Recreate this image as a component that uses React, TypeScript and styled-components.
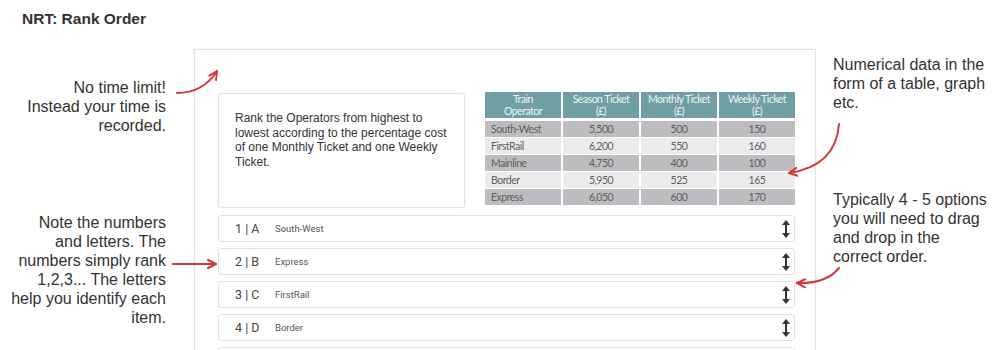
import { FC, Fragment } from 'react'
import styled, { createGlobalStyle } from 'styled-components';

const rows = [
    { name: 'South-West', season: '5,500', monthly: '500', weekly: '150' },
    { name: 'FirstRail', season: '6,200', monthly: '550', weekly: '160' },
    { name: 'Mainline', season: '4,750', monthly: '400', weekly: '100' },
    { name: 'Border', season: '5,950', monthly: '525', weekly: '165' },
    { name: 'Express', season: '6,050', monthly: '600', weekly: '170' },
];

const options = [
    { rank: '1 | A', name: 'South-West' },
    { rank: '2 | B', name: 'Express' },
    { rank: '3 | C', name: 'FirstRail' },
    { rank: '4 | D', name: 'Border' },
];

const DragIcon:FC = () => (
    <svg width="8" height="18" viewBox="0 0 8 18">
        <polygon points="4,0 8,5 0,5" fill="#333" />
        <rect x="3" y="4" width="2" height="10" fill="#333" />
        <polygon points="4,18 8,13 0,13" fill="#333" />
    </svg>
);

const Arrows:FC = () => (
    <ArrowLayer width="1000" height="350" viewBox="0 0 1000 350">
        <defs>
            <marker id="head" viewBox="0 0 10 10" refX="9" refY="5" markerWidth="5" markerHeight="5" orient="auto">
                <path d="M1 1 L9 5 L1 9" fill="none" stroke="#d23a3a" strokeWidth="2" strokeLinecap="round" strokeLinejoin="round" />
            </marker>
        </defs>
        <g fill="none" stroke="#d23a3a" strokeWidth="2" strokeLinecap="round">
            <path d="M177 93 Q203 93 217 71" markerEnd="url(#head)" />
            <path d="M173 264 L216 264" markerEnd="url(#head)" />
            <path d="M839 124 Q836 166 789 173" markerEnd="url(#head)" />
            <path d="M839 268 Q826 284 797 283" markerEnd="url(#head)" />
        </g>
    </ArrowLayer>
);

const App:FC = () => {
    return (
        <Page>
            <GlobalStyle/>
            <Title>NRT: Rank Order</Title>
            <Layout>
                <SideColumn align="right">
                    <Note offset={29}>No time limit!<br/>Instead your time is<br/>recorded.</Note>
                    <Note offset={78}>Note the numbers<br/>and letters. The<br/>numbers simply rank<br/>1,2,3... The letters<br/>help you identify each<br/>item.</Note>
                </SideColumn>
                <Panel>
                    <TopRow>
                        <Question>
                            Rank the Operators from highest to lowest according to the percentage cost of one Monthly Ticket and one Weekly Ticket.
                        </Question>
                        <DataTable>
                            <HeadCell>Train<br/>Operator</HeadCell>
                            <HeadCell>Season Ticket<br/>(£)</HeadCell>
                            <HeadCell>Monthly Ticket<br/>(£)</HeadCell>
                            <HeadCell>Weekly Ticket<br/>(£)</HeadCell>
                            {rows.map((r, i) => (
                                <Fragment key={r.name}>
                                    <Cell shade={i % 2 === 0} first>{r.name}</Cell>
                                    <Cell shade={i % 2 === 0}>{r.season}</Cell>
                                    <Cell shade={i % 2 === 0}>{r.monthly}</Cell>
                                    <Cell shade={i % 2 === 0}>{r.weekly}</Cell>
                                </Fragment>
                            ))}
                        </DataTable>
                    </TopRow>
                    <OptionList>
                        {options.map(o => (
                            <Option key={o.rank}>
                                <Rank>{o.rank}</Rank>
                                <OptionName>{o.name}</OptionName>
                                <Handle><DragIcon/></Handle>
                            </Option>
                        ))}
                        {/* fifth option, only its top edge is in view */}
                        <Option />
                    </OptionList>
                </Panel>
                <SideColumn align="left">
                    <Note offset={6}>Numerical data in the<br/>form of a table, graph<br/>etc.</Note>
                    <Note offset={78}>Typically 4 - 5 options<br/>you will need to drag<br/>and drop in the<br/>correct order.</Note>
                </SideColumn>
            </Layout>
            <Arrows/>
        </Page>
    )
}

const GlobalStyle = createGlobalStyle`
    body {
        margin: 0;
        background: #fff;
        font-family: "Liberation Sans", Arial, sans-serif;
    }
`;

const Page = styled.div`
    position: relative;
    width: 1000px;
    height: 350px;
    overflow: hidden;
    background: #fff;
`;

const Title = styled.h1`
    margin: 0 0 22px;
    padding: 10px 0 0 22px;
    font-size: 15.5px;
    line-height: 17px;
    font-weight: 700;
    color: #333;
`;

const Layout = styled.div`
    display: grid;
    grid-template-columns: 194px 622px 1fr;
    align-items: start;
`;

const SideColumn = styled.div<{ align: 'left' | 'right' }>`
    display: flex;
    flex-direction: column;
    text-align: ${p => p.align};
    padding: ${p => p.align === 'right' ? '0 28px 0 0' : '0 0 0 17px'};
`;

const Note = styled.p<{ offset: number }>`
    margin: ${p => p.offset}px 0 0;
    font-size: 16px;
    line-height: 19px;
    color: #333;
`;

const Panel = styled.div`
    box-sizing: border-box;
    height: 320px;
    padding: 43px 20px 0 23px;
    border: 1px solid #e3e3e3;
    border-bottom: none;
    background: #fff;
    box-shadow: 0 0 2px rgba(0,0,0,0.06);
`;

const TopRow = styled.div`
    display: flex;
    gap: 20px;
    align-items: flex-start;
`;

const Question = styled.div`
    box-sizing: border-box;
    width: 247px;
    height: 115px;
    padding: 17px 12px 0 16px;
    border: 1px solid #e2e2e2;
    border-radius: 3px;
    box-shadow: 0 0 2px rgba(0,0,0,0.08);
    font-size: 12px;
    line-height: 14.5px;
    color: #333;
`;

const DataTable = styled.div`
    width: 310px;
    margin-top: -1px;
    display: grid;
    grid-template-columns: repeat(4, 1fr);
    grid-template-rows: 28px repeat(5, 16px);
    column-gap: 2px;
    row-gap: 1px;
    font-family: Lato, "Open Sans", sans-serif;
    font-size: 10.5px;
    letter-spacing: -0.5px;
`;

const HeadCell = styled.div`
    background: #6f9fa2;
    color: #f0f5f5;
    text-align: center;
    line-height: 12px;
    padding-top: 1px;
    margin-bottom: 2px;
`;

const Cell = styled.div<{ shade: boolean; first?: boolean }>`
    background: ${p => p.shade ? '#bdbdc1' : '#ececec'};
    color: #606060;
    line-height: 16px;
    text-align: ${p => p.first ? 'left' : 'center'};
    padding-left: ${p => p.first ? '6px' : '0'};
`;

const OptionList = styled.div`
    display: flex;
    flex-direction: column;
    gap: 6px;
    margin-top: 7px;
`;

const Option = styled.div`
    box-sizing: border-box;
    height: 27px;
    flex-shrink: 0;
    display: flex;
    align-items: center;
    padding: 0 4px 0 16px;
    border: 1px solid #e2e2e2;
    border-radius: 3px;
    background: #fff;
`;

const Rank = styled.span`
    width: 40px;
    font-family: Roboto, sans-serif;
    font-size: 12.5px;
    color: #444;
`;

const OptionName = styled.span`
    flex: 1;
    font-family: Roboto, sans-serif;
    font-size: 9.5px;
    color: #555;
`;

const Handle = styled.span`
    display: flex;
    align-items: center;
`;

const ArrowLayer = styled.svg`
    position: absolute;
    left: 0;
    top: 0;
    pointer-events: none;
`;

export default App
